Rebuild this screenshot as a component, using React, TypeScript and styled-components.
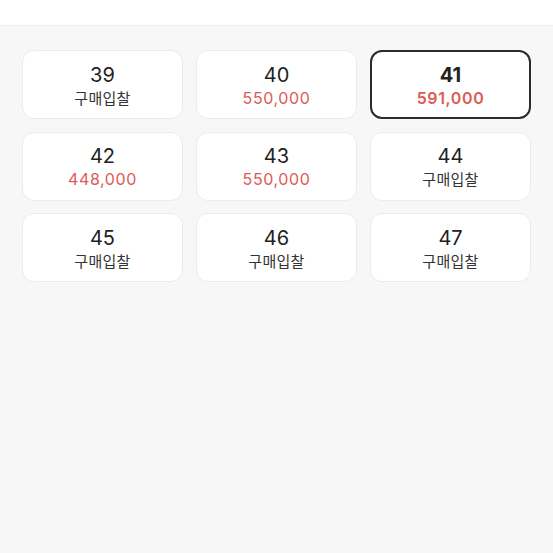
import React from "react";
import styled, { createGlobalStyle } from "styled-components";

const Global = createGlobalStyle`
  html, body { margin: 0; padding: 0; background: #f7f7f7; }
  body { font-family: "Noto Sans", "Noto Sans CJK KR", sans-serif; }
`;

const Page = styled.div`
  width: 553px;
  height: 553px;
  background: #f7f7f7;
  display: flex;
  flex-direction: column;
`;

const Header = styled.div`
  height: 25px;
  background: #ffffff;
  border-bottom: 1px solid #ececec;
`;

const Grid = styled.div`
  display: grid;
  grid-template-columns: repeat(3, 161px);
  column-gap: 13px;
  row-gap: 12.5px;
  padding: 24px 22px 0 22px;
`;

const Card = styled.div<{ $selected?: boolean }>`
  height: 69px;
  box-sizing: border-box;
  background: #ffffff;
  border-radius: 12px;
  border: ${(p) => (p.$selected ? "2px solid #2b2b2b" : "1px solid #ebebeb")};
  display: flex;
  flex-direction: column;
  align-items: center;
  justify-content: center;
  gap: 1px;
  padding-top: 1px;
`;

const Size = styled.div<{ $selected?: boolean }>`
  font-family: Inter, "Noto Sans", sans-serif;
  font-size: 20px;
  line-height: 24px;
  color: #222222;
  font-weight: ${(p) => (p.$selected ? 700 : 400)};
`;

const Price = styled.div<{ $selected?: boolean }>`
  font-family: Inter, "Noto Sans", sans-serif;
  font-size: 16px;
  line-height: 20px;
  letter-spacing: 0.6px;
  color: #dd5a56;
  font-weight: ${(p) => (p.$selected ? 600 : 400)};
`;

const Bid = styled.div`
  font-family: "Noto Sans CJK KR", sans-serif;
  font-size: 15px;
  line-height: 20px;
  letter-spacing: 0.3px;
  color: #333333;
`;

const items: { size: string; price?: string; selected?: boolean }[] = [
  { size: "39" },
  { size: "40", price: "550,000" },
  { size: "41", price: "591,000", selected: true },
  { size: "42", price: "448,000" },
  { size: "43", price: "550,000" },
  { size: "44" },
  { size: "45" },
  { size: "46" },
  { size: "47" },
];

export default function App() {
  return (
    <Page>
      <Global />
      <Header />
      <Grid>
        {items.map((it) => (
          <Card key={it.size} $selected={it.selected}>
            <Size $selected={it.selected}>{it.size}</Size>
            {it.price ? (
              <Price $selected={it.selected}>{it.price}</Price>
            ) : (
              <Bid>구매입찰</Bid>
            )}
          </Card>
        ))}
      </Grid>
    </Page>
  );
}
